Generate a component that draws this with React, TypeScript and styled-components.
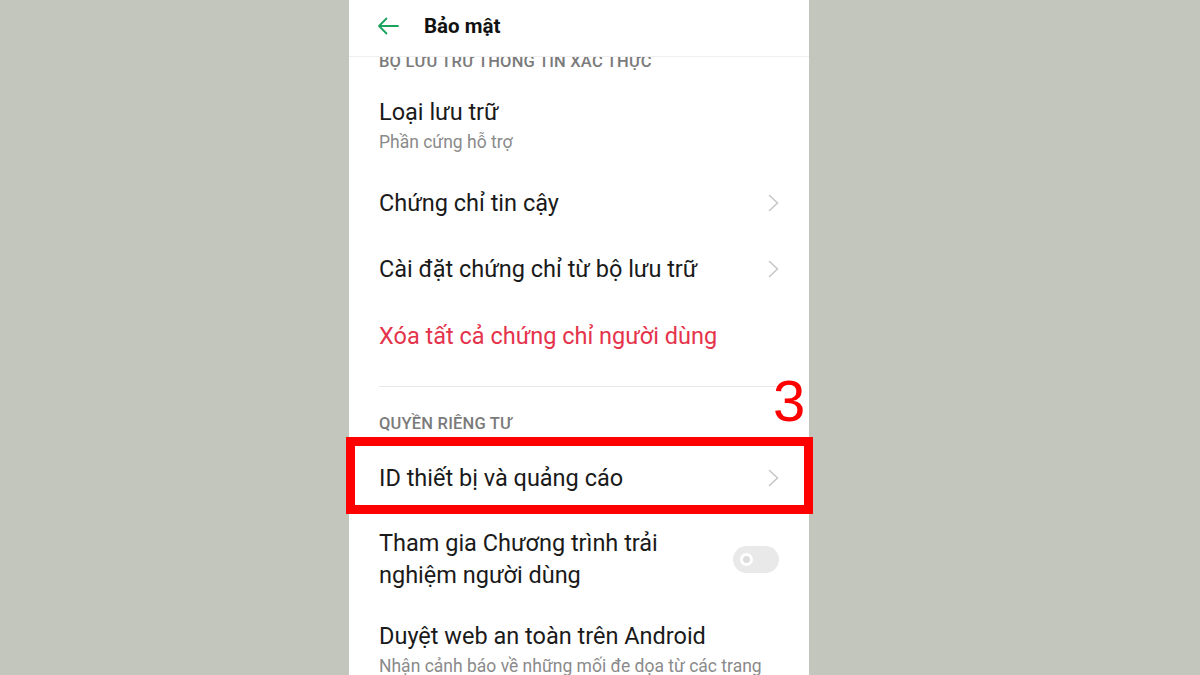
import styled, { createGlobalStyle } from 'styled-components'

const GlobalStyle = createGlobalStyle`
  html, body {
    margin: 0;
    padding: 0;
    background: #c3c6bc;
  }
  body {
    font-family: Roboto, "Noto Sans", Arial, sans-serif;
  }
`

const Page = styled.div`
  width: 1200px;
  height: 675px;
  display: flex;
  padding-left: 349px;
  box-sizing: border-box;
  overflow: hidden;
`

const Phone = styled.div`
  position: relative;
  width: 460px;
  height: 675px;
  background: #ffffff;
  display: flex;
  flex-direction: column;
`

const Header = styled.header`
  height: 57px;
  flex-shrink: 0;
  display: flex;
  align-items: center;
  gap: 25px;
  padding: 0 0 5px 28px;
  box-sizing: border-box;
  border-bottom: 1px solid #efefef;
  position: relative;
  z-index: 1;
  background: #ffffff;
`

const Title = styled.h1`
  margin: 0;
  font-size: 20.5px;
  font-weight: 700;
  color: #111111;
`

const Body = styled.div`
  flex: 1;
  overflow: hidden;
  padding-top: 3px;
`

const SectionLabel = styled.div<{ $top?: number }>`
  margin-top: ${p => p.$top ?? 0}px;
  padding: 0 30px;
  height: 20px;
  line-height: 20px;
  font-size: 16.5px;
  font-weight: 500;
  color: #7b7b7b;
  letter-spacing: 0.2px;
  white-space: nowrap;
`

const Row = styled.div<{ $h?: number; $pt?: number; $pb?: number }>`
  display: flex;
  align-items: center;
  justify-content: space-between;
  gap: 20px;
  padding: ${p => p.$pt ?? 0}px 30px ${p => p.$pb ?? 0}px 30px;
  min-height: ${p => p.$h ?? 0}px;
  box-sizing: border-box;
`

const TextCol = styled.div`
  display: flex;
  flex-direction: column;
  gap: 4px;
`

const ItemTitle = styled.div<{ $danger?: boolean; $max?: number }>`
  font-size: 23.5px;
  line-height: 30px;
  color: ${p => (p.$danger ? '#e5334b' : '#1a1a1a')};
  max-width: ${p => (p.$max ? `${p.$max}px` : 'none')};
  &.multi {
    line-height: 32px;
  }
`

const ItemSub = styled.div`
  font-size: 17.5px;
  line-height: 22px;
  color: #8a8a8a;
  white-space: nowrap;
`

const Divider = styled.div`
  margin: 17px 30px 0;
  height: 1px;
  background: #e8e8e8;
`

const Toggle = styled.div`
  flex-shrink: 0;
  width: 46px;
  height: 27px;
  border-radius: 14px;
  background: #e9e9e9;
  display: flex;
  align-items: center;
  padding-left: 7px;
  box-sizing: border-box;
`

const Knob = styled.div`
  width: 13px;
  height: 13px;
  border-radius: 50%;
  border: 3px solid #ffffff;
  background: #dcdcdc;
  box-sizing: border-box;
`

const Highlight = styled.div`
  position: absolute;
  left: -3px;
  top: 437px;
  width: 467px;
  height: 77px;
  border: 9px solid #ff0000;
  box-sizing: border-box;
  pointer-events: none;
`

const StepNumber = styled.div`
  position: absolute;
  left: 424px;
  top: 372px;
  font-family: "Liberation Sans", Arial, sans-serif;
  font-size: 58px;
  line-height: 58px;
  color: #ff0000;
`

const BackArrow = () => (
  <svg width="22" height="18" viewBox="0 0 22 18" fill="none">
    <path d="M21 9H2M9.5 1.5L2 9l7.5 7.5" stroke="#1ba35e" strokeWidth="1.8" strokeLinecap="round" strokeLinejoin="round" />
  </svg>
)

const Chevron = () => (
  <svg width="11" height="18" viewBox="0 0 11 18" fill="none">
    <path d="M1.5 1.5L9.5 9l-8 7.5" stroke="#c6c6c6" strokeWidth="1.6" strokeLinecap="round" strokeLinejoin="round" />
  </svg>
)

export default function App() {
  return (
    <>
      <GlobalStyle />
      <Page>
        <Phone>
          <Header>
            <BackArrow />
            <Title>Bảo mật</Title>
          </Header>
          <Body>
            <SectionLabel $top={-8}>BỘ LƯU TRỮ THÔNG TIN XÁC THỰC</SectionLabel>
            <Row $pt={25} $pb={17}>
              <TextCol>
                <ItemTitle>Loại lưu trữ</ItemTitle>
                <ItemSub>Phần cứng hỗ trợ</ItemSub>
              </TextCol>
            </Row>
            <Row $h={66}>
              <ItemTitle>Chứng chỉ tin cậy</ItemTitle>
              <Chevron />
            </Row>
            <Row $h={66}>
              <ItemTitle>Cài đặt chứng chỉ từ bộ lưu trữ</ItemTitle>
              <Chevron />
            </Row>
            <Row $h={67}>
              <ItemTitle $danger>Xóa tất cả chứng chỉ người dùng</ItemTitle>
            </Row>
            <Divider />
            <SectionLabel $top={27}>QUYỀN RIÊNG TƯ</SectionLabel>
            <Row $h={66} $pt={0} style={{ marginTop: 11 }}>
              <ItemTitle>ID thiết bị và quảng cáo</ItemTitle>
              <Chevron />
            </Row>
            <Row $pt={16} $pb={15}>
              <ItemTitle className="multi" $max={300}>
                Tham gia Chương trình trải nghiệm người dùng
              </ItemTitle>
              <Toggle>
                <Knob />
              </Toggle>
            </Row>
            <Row $pt={15}>
              <TextCol>
                <ItemTitle>Duyệt web an toàn trên Android</ItemTitle>
                <ItemSub>Nhận cảnh báo về những mối đe dọa từ các trang</ItemSub>
              </TextCol>
            </Row>
          </Body>
          <StepNumber>3</StepNumber>
          <Highlight />
        </Phone>
      </Page>
    </>
  )
}
